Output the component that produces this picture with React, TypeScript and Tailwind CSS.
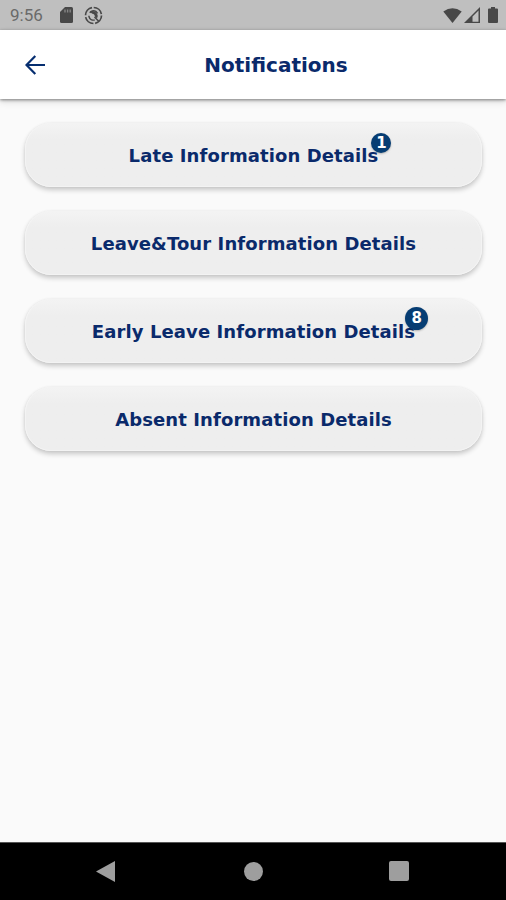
import { clsx } from "clsx"

type Item = {
  label: string
  count?: number
  badgeClass?: string
}

const items: Item[] = [
  {
    label: "Late Information Details",
    count: 1,
    badgeClass: "-top-[12px] -right-[13px] size-5 text-[15px]",
  },
  { label: "Leave&Tour Information Details" },
  {
    label: "Early Leave Information Details",
    count: 8,
    badgeClass: "-top-[14px] -right-[13px] size-[23px] text-[15px]",
  },
  { label: "Absent Information Details" },
]

function StatusBar() {
  return (
    <div className="flex h-[30px] items-center bg-[#bfbfbf] pr-[8px] pl-[10px] text-[#484848]">
      <span className="w-[50px] font-['Roboto',sans-serif] text-[17px] leading-none text-[#6a6a6a]">9:56</span>
      {/* SD card */}
      <svg className="h-[16px] w-[13px]" viewBox="0 0 13 16" fill="currentColor">
        <path d="M5 0h6.500Q13 0 13 1.500v13q0 1.500-1.500 1.500h-10Q0 16 0 14.500V5z" />
        <path d="M5 2.500v3M7.600 2.500v3M10.200 2.500v3" stroke="#858585" strokeWidth="1.400" />
      </svg>
      {/* Sync ring */}
      <svg className="ml-[11px] size-[19px]" viewBox="0 0 19 19" fill="none" stroke="currentColor">
        <circle cx="9.500" cy="9.500" r="8" strokeWidth="1.700" strokeDasharray="10.800 1.760" />
        <circle cx="9.500" cy="9.500" r="4.600" strokeWidth="1.500" strokeDasharray="8 3 9 9" transform="rotate(75 9.500 9.500)" />
        <path d="M6 5.800 8.500 5q4.500.5 5.300 5l-.8 2.600-2.300-2.300a2.200 2.200 0 0 0-2.500-2.500z" fill="currentColor" stroke="none" />
        <path d="m10.500 11 4.500 4.500" strokeWidth="1.500" />
      </svg>
      <svg className="ml-auto h-[15px] w-[19px]" viewBox="0 0 19 15" fill="currentColor">
        <path d="M.3 3.400Q9.500-3 18.700 3.400L9.500 15z" />
      </svg>
      <svg className="ml-[2px] h-4 w-4" viewBox="0 0 16 16" fill="currentColor">
        <path d="M0 16 16 0v16zM8.500 9.500v5.200h6V3.500z" fillRule="evenodd" />
      </svg>
      <svg className="ml-[8px] h-4 w-[10px]" viewBox="0 0 10 16" fill="currentColor">
        <path d="M3 0h4v1.500h2q1 0 1 1V15q0 1-1 1H1q-1 0-1-1V2.500q0-1 1-1h2z" />
      </svg>
    </div>
  )
}

function Header() {
  return (
    <header className="z-10 grid h-[69px] shrink-0 grid-cols-[46px_1fr_46px] items-center bg-white shadow-[0_1px_3px_rgba(0,0,0,0.45),0_3px_7px_rgba(0,0,0,0.12)]">
      <button aria-label="Back" className="pl-[25px]">
        <svg className="size-5" viewBox="0 0 20 20" fill="none" stroke="#062e70" strokeWidth="2.200">
          <path d="M20 10H2M10.300 1 1.500 10l8.800 9" />
        </svg>
      </button>
      <h1 className="pt-[1px] pl-[46px] text-center text-[20px] leading-none font-bold">Notifications</h1>
    </header>
  )
}

function NotificationButton({ label, count, badgeClass }: Item) {
  return (
    <button className="flex h-16 w-full items-center justify-center rounded-[26px] border border-[#f3f3f3] bg-linear-to-b from-[#f3f3f3] to-[#eeeeee] to-25% pt-[4px] shadow-[0_3px_5px_rgba(0,0,0,0.2),0_0_3px_rgba(0,0,0,0.06)]">
      <span className="relative">
        <span className="text-[18px] leading-none font-bold tracking-[0.1px] whitespace-nowrap">{label}</span>
        {count !== undefined && (
          <span
            className={clsx(
              "absolute flex items-center justify-center rounded-full bg-[#063d73] leading-none font-bold text-white shadow-[0_1px_2px_rgba(0,0,0,0.25)]",
              badgeClass,
            )}
          >
            {count}
          </span>
        )}
      </span>
    </button>
  )
}

function NavBar() {
  return (
    <nav className="flex h-[58px] items-center justify-between border-t border-[#555] bg-black pr-[97px] pb-[1px] pl-[96px]">
      <svg className="h-[21px] w-[19px]" viewBox="0 0 19 21" fill="#9e9e9e">
        <path d="M0 10.500 19 0v21z" />
      </svg>
      <div className="ml-[2px] size-[19px] rounded-full bg-[#9e9e9e]" />
      <div className="size-5 rounded-[2px] bg-[#9e9e9e]" />
    </nav>
  )
}

export default function App() {
  return (
    <div className="flex h-[900px] w-[506px] flex-col overflow-hidden bg-[#fafafa] font-['DejaVu_Sans',sans-serif] text-[#0a2a6b]">
      <StatusBar />
      <Header />
      <main className="flex flex-1 flex-col gap-6 pt-6 pr-6 pl-[25px]">
        {items.map((item) => (
          <NotificationButton key={item.label} {...item} />
        ))}
      </main>
      <NavBar />
    </div>
  )
}
